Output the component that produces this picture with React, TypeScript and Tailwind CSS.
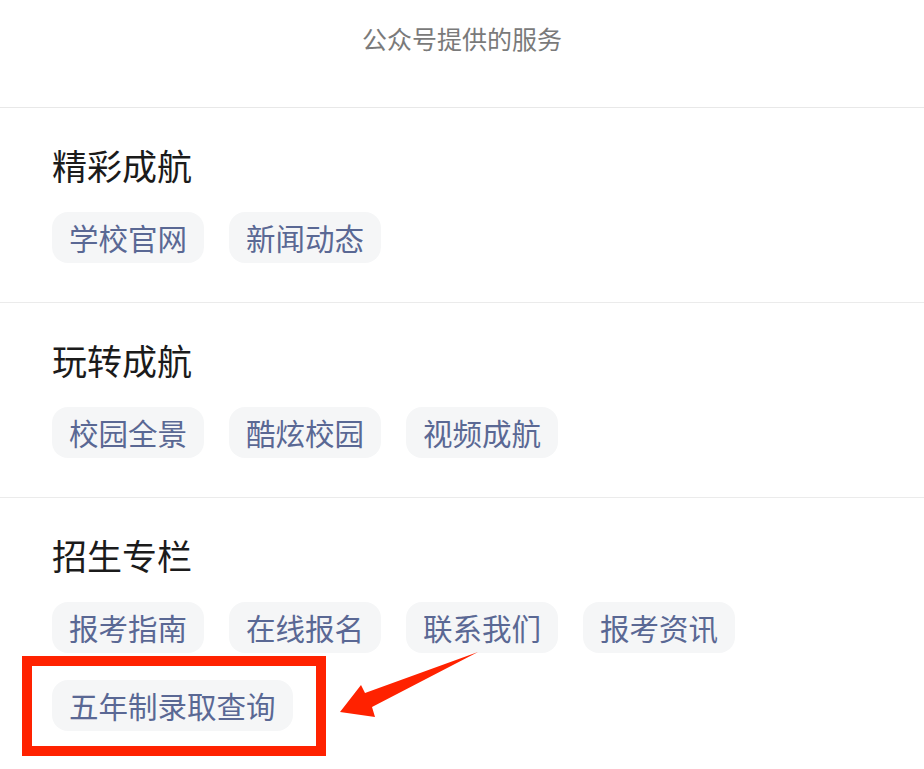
const sections = [
  { title: "精彩成航", items: ["学校官网", "新闻动态"] },
  { title: "玩转成航", items: ["校园全景", "酷炫校园", "视频成航"] },
  { title: "招生专栏", items: ["报考指南", "在线报名", "联系我们", "报考资讯", "五年制录取查询"] },
];

function Chip({ label }: { label: string }) {
  return (
    <div className="h-[51px] px-[17px] rounded-[16px] bg-[#f5f6f7] flex items-center text-[29.5px] leading-none text-[#5a6894]">
      {label}
    </div>
  );
}

export default function App() {
  return (
    <div
      className="relative w-[924px] min-h-[769px] bg-white overflow-hidden"
      style={{ fontFamily: '"Noto Sans CJK SC", "Noto Sans", sans-serif' }}
    >
      {/* header */}
      <div className="h-[108px] pt-[20px] border-b border-[#e8e8e8] text-center text-[25px] leading-[36px] text-[#7a7a7a]">
        公众号提供的服务
      </div>

      {sections.map((s, i) => (
        <div
          key={s.title}
          className={`pl-[52px] pr-[20px] pt-[33px] pb-[39px] ${i < sections.length - 1 ? "border-b border-[#ebebeb]" : ""}`}
        >
          <div className="text-[35px] leading-[48px] text-[#1b1b1b] mb-[23px]">{s.title}</div>
          <div className="flex flex-wrap gap-x-[25px] gap-y-[27px]">
            {s.items.map((it) => (
              <Chip key={it} label={it} />
            ))}
          </div>
        </div>
      ))}

      {/* annotation: red box + arrow */}
      <div className="absolute left-[22px] top-[656px] w-[304px] h-[100px] border-[10px] border-[#ff2200]" />
      <svg className="absolute left-0 top-0 pointer-events-none" width="924" height="769">
        <polygon
          points="478,652 372,707 375,717 340,712 361,685 365,693"
          fill="#ff2200"
        />
      </svg>
    </div>
  );
}
